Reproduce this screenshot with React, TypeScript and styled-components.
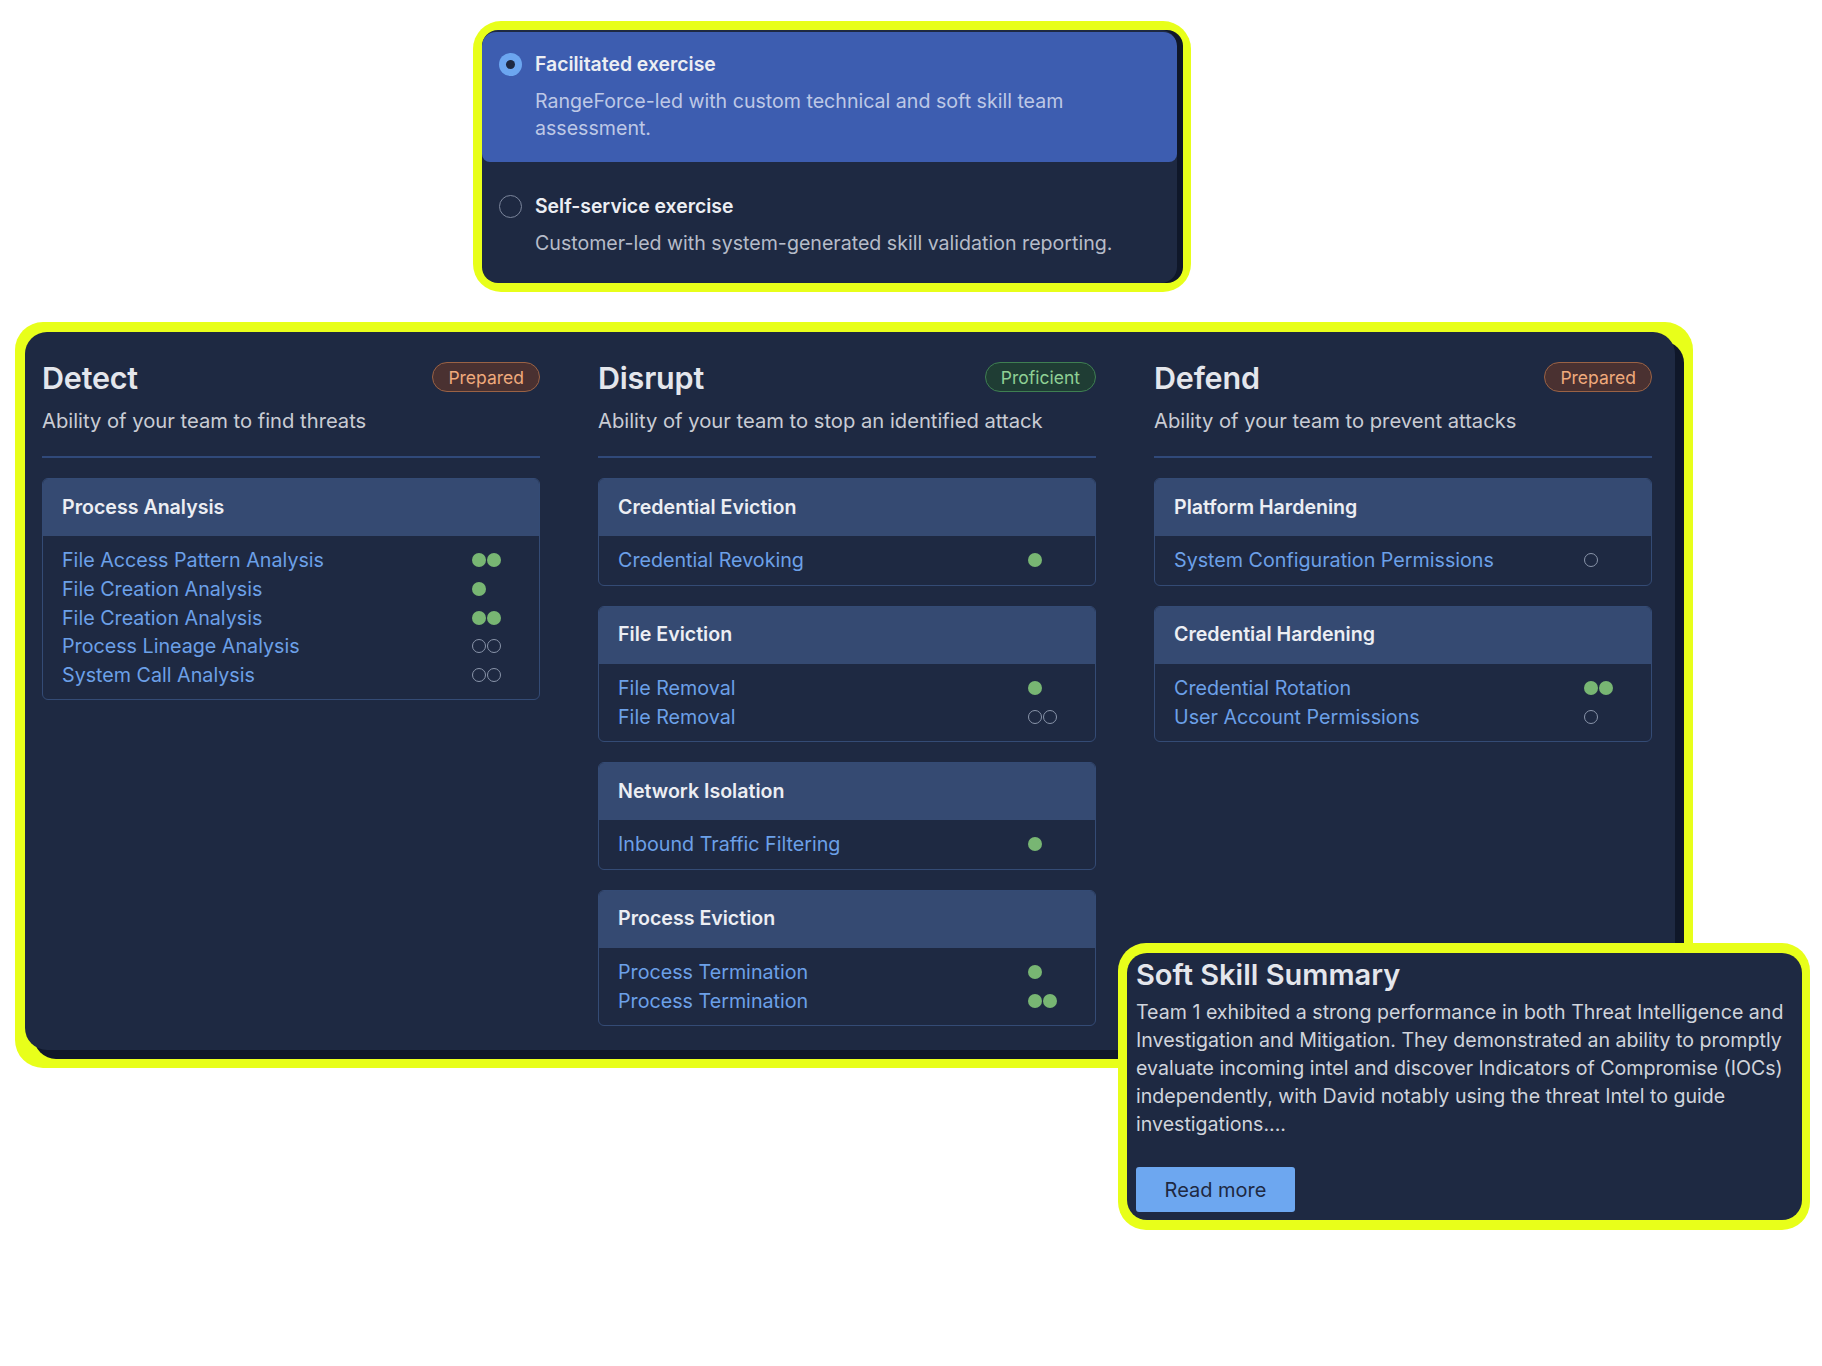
import styled, { createGlobalStyle } from "styled-components";

const GlobalStyle = createGlobalStyle`
  html, body {
    margin: 0;
    padding: 0;
    background: #ffffff;
  }
  body {
    font-family: Inter, "Open Sans", "Liberation Sans", sans-serif;
    -webkit-font-smoothing: antialiased;
  }
  * {
    box-sizing: border-box;
  }
`;

type Level = "Prepared" | "Proficient";

type Skill = { name: string; score: number; max: number };
type Group = { title: string; skills: Skill[] };
type Area = {
  name: string;
  level: Level;
  description: string;
  groups: Group[];
};

const areas: Area[] = [
  {
    name: "Detect",
    level: "Prepared",
    description: "Ability of your team to find threats",
    groups: [
      {
        title: "Process Analysis",
        skills: [
          { name: "File Access Pattern Analysis", score: 2, max: 2 },
          { name: "File Creation Analysis", score: 1, max: 1 },
          { name: "File Creation Analysis", score: 2, max: 2 },
          { name: "Process Lineage Analysis", score: 0, max: 2 },
          { name: "System Call Analysis", score: 0, max: 2 },
        ],
      },
    ],
  },
  {
    name: "Disrupt",
    level: "Proficient",
    description: "Ability of your team to stop an identified attack",
    groups: [
      {
        title: "Credential Eviction",
        skills: [{ name: "Credential Revoking", score: 1, max: 1 }],
      },
      {
        title: "File Eviction",
        skills: [
          { name: "File Removal", score: 1, max: 1 },
          { name: "File Removal", score: 0, max: 2 },
        ],
      },
      {
        title: "Network Isolation",
        skills: [{ name: "Inbound Traffic Filtering", score: 1, max: 1 }],
      },
      {
        title: "Process Eviction",
        skills: [
          { name: "Process Termination", score: 1, max: 1 },
          { name: "Process Termination", score: 2, max: 2 },
        ],
      },
    ],
  },
  {
    name: "Defend",
    level: "Prepared",
    description: "Ability of your team to prevent attacks",
    groups: [
      {
        title: "Platform Hardening",
        skills: [{ name: "System Configuration Permissions", score: 0, max: 1 }],
      },
      {
        title: "Credential Hardening",
        skills: [
          { name: "Credential Rotation", score: 2, max: 2 },
          { name: "User Account Permissions", score: 0, max: 1 },
        ],
      },
    ],
  },
];

const options = [
  {
    title: "Facilitated exercise",
    text: "RangeForce-led with custom technical and soft skill team assessment.",
    selected: true,
  },
  {
    title: "Self-service exercise",
    text: "Customer-led with system-generated skill validation reporting.",
    selected: false,
  },
];

export default function App() {
  return (
    <Page>
      <GlobalStyle />

      <ExerciseFrame>
        <ExerciseCard>
          {options.map((opt) => (
            <Option key={opt.title} $selected={opt.selected}>
              <Radio $selected={opt.selected} />
              <OptionTitle>{opt.title}</OptionTitle>
              <OptionText $selected={opt.selected}>{opt.text}</OptionText>
            </Option>
          ))}
        </ExerciseCard>
      </ExerciseFrame>

      <ResultsFrame>
        <ResultsCard>
          {areas.map((area) => (
            <Column key={area.name}>
              <ColumnHead>
                <AreaName>{area.name}</AreaName>
                <Badge $level={area.level}>{area.level}</Badge>
              </ColumnHead>
              <AreaText>{area.description}</AreaText>
              <Divider />
              <GroupList>
                {area.groups.map((group) => (
                  <GroupBox key={group.title}>
                    <GroupHead>{group.title}</GroupHead>
                    <GroupBody>
                      {group.skills.map((skill, idx) => (
                        <SkillRow key={idx}>
                          <SkillName>{skill.name}</SkillName>
                          <Dots>
                            {Array.from({ length: skill.max }).map((_, i) => (
                              <Dot key={i} $filled={i < skill.score} />
                            ))}
                          </Dots>
                        </SkillRow>
                      ))}
                    </GroupBody>
                  </GroupBox>
                ))}
              </GroupList>
            </Column>
          ))}
        </ResultsCard>
      </ResultsFrame>

      <SummaryFrame>
        <SummaryCard>
          <SummaryTitle>Soft Skill Summary</SummaryTitle>
          <SummaryText>
            Team 1 exhibited a strong performance in both Threat Intelligence and
            Investigation and Mitigation. They demonstrated an ability to promptly
            evaluate incoming intel and discover Indicators of Compromise (IOCs)
            independently, with David notably using the threat Intel to guide
            investigations....
          </SummaryText>
          <ReadMore>Read more</ReadMore>
        </SummaryCard>
      </SummaryFrame>
    </Page>
  );
}

const Page = styled.div`
  position: relative;
  width: 1822px;
  height: 1366px;
  padding-top: 21px;
  overflow: hidden;
`;

/* ---------- exercise picker ---------- */

const ExerciseFrame = styled.div`
  margin-left: 473px;
  width: 718px;
  background: #e8ff1a;
  border-radius: 28px;
  padding: 9px 14px 9px 9px;
`;

const ExerciseCard = styled.div`
  background: #1e2942;
  border-radius: 16px;
  box-shadow: 6px 0 0 #0f1729;
  padding: 2px 0 6px;
  display: flex;
  flex-direction: column;
  gap: 12px;
  overflow: hidden;
`;

const Option = styled.div<{ $selected: boolean }>`
  display: grid;
  grid-template-columns: 23px 1fr;
  column-gap: 13px;
  align-items: center;
  padding: 18px 24px 20px 17px;
  background: ${(p) => (p.$selected ? "#3d5db0" : "transparent")};
  border-radius: 14px 14px 8px 8px;
`;

const Radio = styled.span<{ $selected: boolean }>`
  width: 23px;
  height: 23px;
  border-radius: 50%;
  position: relative;
  background: ${(p) => (p.$selected ? "#6ca6f0" : "transparent")};
  border: ${(p) => (p.$selected ? "none" : "1.5px solid #7c869c")};

  &::after {
    content: "";
    display: ${(p) => (p.$selected ? "block" : "none")};
    position: absolute;
    left: 50%;
    top: 50%;
    width: 9px;
    height: 9px;
    margin: -4.5px 0 0 -4.5px;
    border-radius: 50%;
    background: #1e2942;
  }
`;

const OptionTitle = styled.div`
  font-size: 19.4px;
  font-weight: 600;
  line-height: 28px;
  color: #eceef3;
`;

const OptionText = styled.div<{ $selected: boolean }>`
  grid-column: 2;
  margin-top: 10px;
  font-size: 19.6px;
  line-height: 27px;
  color: ${(p) => (p.$selected ? "#bdc8e6" : "#b6bcc9")};
  max-width: 580px;
`;

/* ---------- results board ---------- */

const ResultsFrame = styled.div`
  margin-top: 30px;
  margin-left: 15px;
  width: 1678px;
  background: #e8ff1a;
  border-radius: 28px;
  padding: 10px 18px 18px 10px;
`;

const ResultsCard = styled.div`
  background: #1e2942;
  border-radius: 22px;
  box-shadow: 9px 9px 0 #0f1729;
  padding: 27px 23px 24px 17px;
  display: grid;
  grid-template-columns: repeat(3, 498px);
  column-gap: 58px;
  align-items: start;
`;

const Column = styled.div`
  display: flex;
  flex-direction: column;
`;

const ColumnHead = styled.div`
  height: 36px;
  display: flex;
  align-items: center;
  justify-content: space-between;
`;

const AreaName = styled.h2`
  margin: 0;
  font-size: 30.5px;
  font-weight: 600;
  color: #e4e6ec;
  letter-spacing: -0.2px;
`;

const badgeColors = {
  Prepared: { bg: "#4a3131", border: "#9a6245", text: "#f0aa7c" },
  Proficient: { bg: "#1f3d34", border: "#3f7f52", text: "#8fd094" },
};

const Badge = styled.span<{ $level: Level }>`
  height: 30px;
  padding: 0 15px;
  border-radius: 15px;
  display: inline-flex;
  align-items: center;
  font-size: 17.5px;
  background: ${(p) => badgeColors[p.$level].bg};
  border: 1.5px solid ${(p) => badgeColors[p.$level].border};
  color: ${(p) => badgeColors[p.$level].text};
`;

const AreaText = styled.p`
  margin: 12px 0 0;
  font-size: 20.2px;
  line-height: 28px;
  color: #c9ccd4;
`;

const Divider = styled.div`
  margin-top: 21px;
  height: 2px;
  background: #30497a;
`;

const GroupList = styled.div`
  margin-top: 20px;
  display: flex;
  flex-direction: column;
  gap: 20px;
`;

const GroupBox = styled.div`
  border: 1px solid #344b75;
  border-radius: 6px;
  overflow: hidden;
`;

const GroupHead = styled.div`
  height: 57px;
  display: flex;
  align-items: center;
  padding: 0 0 2px 19px;
  background: #354a72;
  font-size: 19.6px;
  font-weight: 600;
  color: #eceef3;
`;

const GroupBody = styled.div`
  padding: 10px 0 10px 19px;
`;

const SkillRow = styled.div`
  display: grid;
  grid-template-columns: 1fr 67px;
  align-items: center;
  height: 28.7px;
`;

const SkillName = styled.span`
  font-size: 19.7px;
  color: #6ca0e8;
  white-space: nowrap;
`;

const Dots = styled.span`
  display: flex;
  gap: 1px;
`;

const Dot = styled.span<{ $filled: boolean }>`
  width: 14px;
  height: 14px;
  border-radius: 50%;
  background: ${(p) => (p.$filled ? "#78b673" : "transparent")};
  border: ${(p) => (p.$filled ? "none" : "1.5px solid #8a95aa")};
`;

/* ---------- soft skill summary (floats over the board) ---------- */

const SummaryFrame = styled.div`
  position: absolute;
  left: 1118px;
  top: 943px;
  width: 692px;
  background: #e8ff1a;
  border-radius: 28px;
  padding: 10px 8px 10px 9px;
`;

const SummaryCard = styled.div`
  background: #1e2942;
  border-radius: 20px;
  padding: 4px 5px 8px 9px;
`;

const SummaryTitle = styled.h3`
  margin: 0;
  font-size: 29px;
  font-weight: 600;
  line-height: 36px;
  color: #e4e6ec;
`;

const SummaryText = styled.p`
  margin: 5px 0 0;
  font-size: 19.6px;
  line-height: 28px;
  color: #d0d4dc;
`;

const ReadMore = styled.button`
  margin-top: 29px;
  width: 159px;
  height: 45px;
  border: none;
  border-radius: 3px;
  background: #6da7f0;
  color: #1e2942;
  font-family: inherit;
  font-size: 20px;
  cursor: pointer;
`;
